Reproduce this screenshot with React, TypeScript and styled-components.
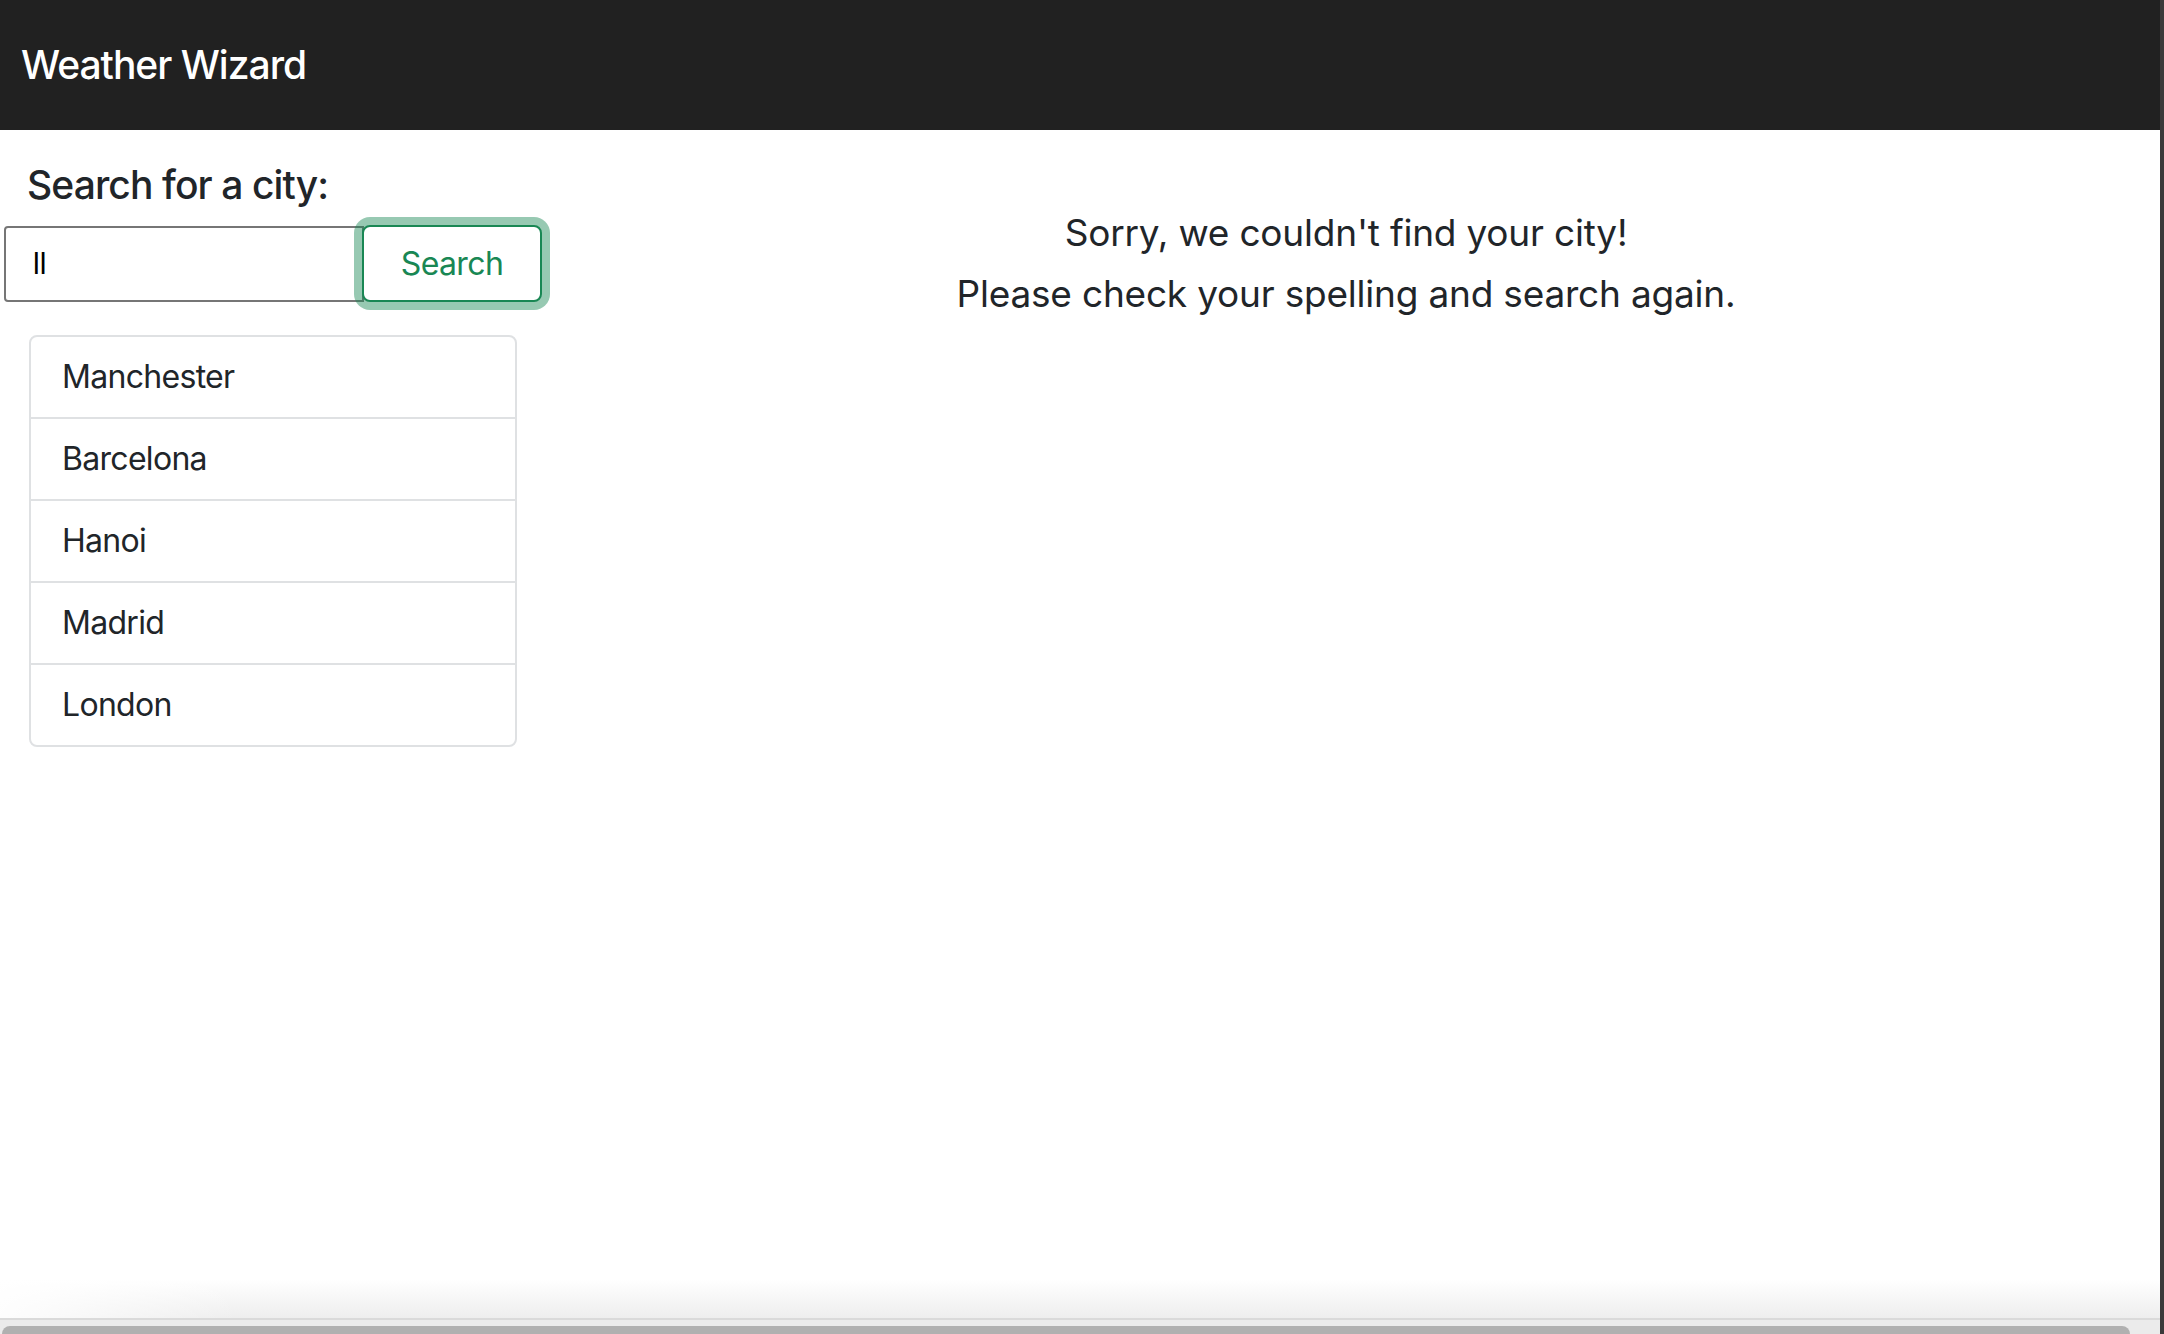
import React from "react";
import styled, { createGlobalStyle } from "styled-components";

const GlobalStyle = createGlobalStyle`
  html, body { margin: 0; padding: 0; height: 100%; background: #ffffff; }
  body { font-family: Inter, "Noto Sans", "Liberation Sans", sans-serif; color: #212529; overflow: hidden; }
  #root { height: 100%; }
  * { box-sizing: border-box; }
`;

const Frame = styled.div`
  display: flex;
  height: 100vh;
  width: 100%;
`;

const Page = styled.div`
  flex: 1;
  display: flex;
  flex-direction: column;
  min-width: 0;
`;

const WindowEdge = styled.div`
  width: 4px;
  background: #3a3a3a;
`;

const Navbar = styled.header`
  height: 130px;
  background: #212121;
  display: flex;
  align-items: center;
  padding-left: 21px;
  padding-bottom: 2px;
`;

const Brand = styled.span`
  color: #ffffff;
  font-size: 39px;
  font-weight: 500;
  letter-spacing: -1px;
`;

const Main = styled.main`
  flex: 1;
  display: grid;
  grid-template-columns: 532px 1fr;
  align-items: start;
`;

const Sidebar = styled.section`
  display: flex;
  flex-direction: column;
  padding-top: 31px;
`;

const SearchHeading = styled.h2`
  margin: 0 0 17px 27px;
  font-size: 39px;
  line-height: 48px;
  font-weight: 500;
  letter-spacing: -0.9px;
`;

const SearchRow = styled.form`
  display: flex;
  align-items: stretch;
  margin-left: 4px;
  height: 76px;
`;

const CityInput = styled.input`
  flex: 0 0 360px;
  width: 360px;
  height: 76px;
  border: 2px solid #767676;
  border-radius: 4px 0 0 4px;
  padding: 0 27px;
  font-family: "Liberation Sans", Arial, sans-serif;
  font-size: 30px;
  color: #000;
  outline: none;
  margin-right: -2px;
`;

const SearchButton = styled.button`
  flex: 0 0 180px;
  width: 180px;
  height: 77px;
  margin-top: -1px;
  border: 2px solid #198754;
  border-radius: 8px;
  background: #ffffff;
  color: #198754;
  font-family: inherit;
  font-size: 32px;
  letter-spacing: -0.6px;
  box-shadow: 0 0 0 8px rgba(25, 135, 84, 0.45);
  cursor: pointer;
  position: relative;
`;

const CityList = styled.ul`
  list-style: none;
  margin: 33px 0 0 29px;
  padding: 0;
  width: 488px;
  border: 2px solid #dfe1e3;
  border-radius: 8px;
`;

const CityItem = styled.li`
  padding: 16px 31px;
  font-size: 32px;
  line-height: 48px;
  letter-spacing: -0.7px;
  & + & { border-top: 2px solid #dfe1e3; }
`;

const MessageArea = styled.section`
  padding-top: 72px;
  text-align: center;
`;

const MessageLine = styled.p`
  margin: 0;
  font-size: 37px;
  line-height: 61px;
  letter-spacing: -0.2px;
`;

const BottomFade = styled.div`
  height: 38px;
  background:
    linear-gradient(to right, rgba(255,255,255,0.9) 0, rgba(255,255,255,0) 240px),
    linear-gradient(to bottom, #ffffff 0%, #f6f6f6 50%, #eeeeee 100%);
`;

const ScrollTrack = styled.div`
  height: 16px;
  border-top: 2px solid #dadada;
  background: #ebebeb;
  padding: 6px 30px 0 2px;
`;

const ScrollThumb = styled.div`
  height: 100%;
  background: #b0b0b0;
  border-radius: 8px 8px 0 0;
`;

const cities = ["Manchester", "Barcelona", "Hanoi", "Madrid", "London"];

export default function App() {
  return (
    <>
      <GlobalStyle />
      <Frame>
        <Page>
          <Navbar>
            <Brand>Weather Wizard</Brand>
          </Navbar>
          <Main>
            <Sidebar>
              <SearchHeading>Search for a city:</SearchHeading>
              <SearchRow onSubmit={(e) => e.preventDefault()}>
                <CityInput defaultValue="ll" />
                <SearchButton type="submit">Search</SearchButton>
              </SearchRow>
              <CityList>
                {cities.map((c) => (
                  <CityItem key={c}>{c}</CityItem>
                ))}
              </CityList>
            </Sidebar>
            <MessageArea>
              <MessageLine>Sorry, we couldn't find your city!</MessageLine>
              <MessageLine>Please check your spelling and search again.</MessageLine>
            </MessageArea>
          </Main>
          <BottomFade />
          <ScrollTrack>
            <ScrollThumb />
          </ScrollTrack>
        </Page>
        <WindowEdge />
      </Frame>
    </>
  );
}
